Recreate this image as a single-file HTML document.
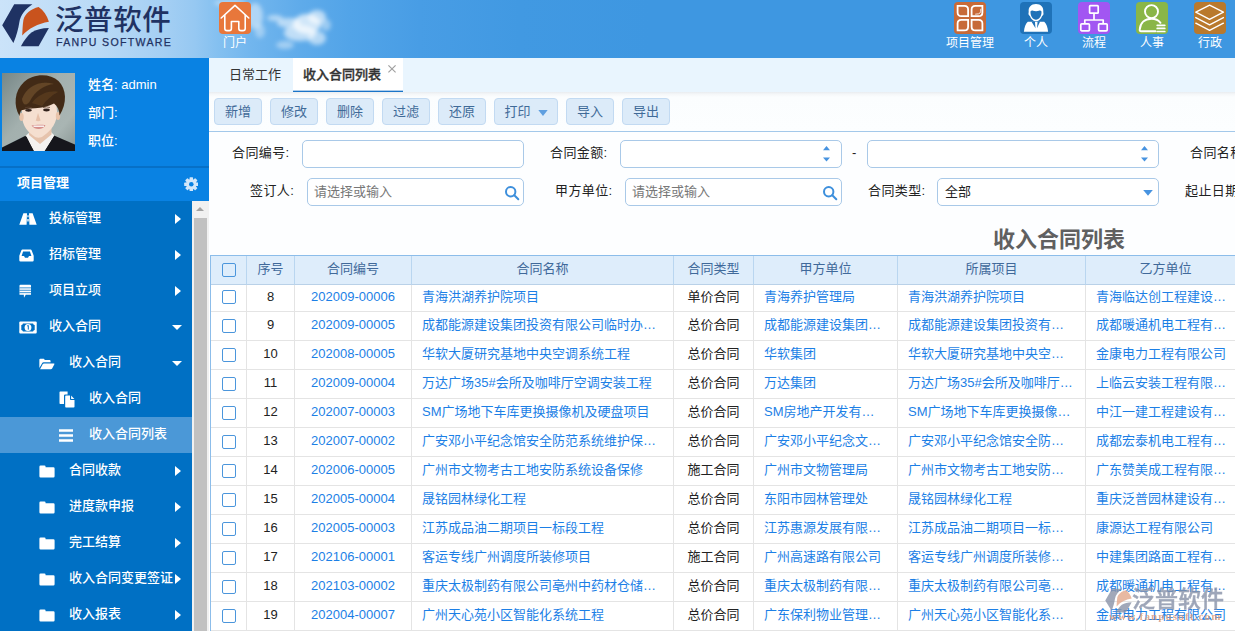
<!DOCTYPE html>
<html lang="zh-CN">
<head>
<meta charset="utf-8">
<title>收入合同列表</title>
<style>
*{box-sizing:border-box;margin:0;padding:0}
html,body{width:1235px;height:631px;overflow:hidden;background:#fff}
body{font-family:"Liberation Sans","Noto Sans CJK SC",sans-serif;font-size:13px;color:#222;position:relative}
.abs{position:absolute}
/* header */
#hdr{position:absolute;left:0;top:0;width:1235px;height:58px;background:linear-gradient(90deg,#cbe3f9 0px,#b9daf6 100px,#a4cff3 165px,#96c8f2 195px,#84c0f0 218px,#72b6ee 250px,#5fabea 300px,#52a4e8 350px,#489de5 420px,#4199e2 520px,#3e97e1 650px,#3e97e1 1235px);overflow:hidden}
#hdr .bline{display:none}
.nav{position:absolute;top:0;text-align:center;color:#fff;font-size:12px;line-height:14px;white-space:nowrap}
.nav .ic{position:absolute;top:2px;width:32px;height:32px;border-radius:4px}
.nav .lb{position:absolute;top:35.5px;left:-20px;width:72px;text-align:center}
/* sidebar */
#user{position:absolute;left:0;top:58px;width:209px;height:108px;background:#0982e3}
#user .t{position:absolute;left:88px;color:#fff;font-size:13px;font-weight:500;line-height:16px;white-space:nowrap;margin-top:1px}
#sep{position:absolute;left:0;top:166px;width:209px;height:2px;background:#0670c7}
#mhead{position:absolute;left:0;top:168px;width:209px;height:33px;background:#0982e3;color:#fff;font-weight:bold;font-size:13px;line-height:30px;padding-left:17px}
#menu{position:absolute;left:0;top:201px;width:192px;height:430px;background:#0070c4;overflow:hidden}
.mi{position:absolute;left:0;width:192px;height:36px;color:#fff;font-weight:500;font-size:13px;line-height:36px;white-space:nowrap}
.mi.on{background:#4b98d7}
.mi svg{position:absolute}
.mi .tx{position:absolute;top:-1px}
.mi .ar{position:absolute;left:175px;top:13px;width:0;height:0;border-left:6px solid #fff;border-top:5px solid transparent;border-bottom:5px solid transparent}
.mi .ad{position:absolute;left:172px;top:16px;width:0;height:0;border-top:5px solid #fff;border-left:5px solid transparent;border-right:5px solid transparent}
#sb{position:absolute;left:192px;top:201px;width:17px;height:430px;background:#f1f1f1}
#sb .th{position:absolute;left:2px;top:17px;width:13px;height:413px;background:#c1c1c1}
#sb .up{position:absolute;left:4px;top:6px;width:0;height:0;border-bottom:4px solid #a3a3a3;border-left:4px solid transparent;border-right:4px solid transparent}
/* main */
#tabs{position:absolute;left:209px;top:58px;width:1026px;height:34px;background:#e9f5fe}
#tabs .t1{position:absolute;left:20px;top:0;height:34px;line-height:33px;font-size:13px;color:#333}
#tabs .t2{position:absolute;left:84px;top:0;width:110px;height:34px;background:#fff;border-bottom:1px solid #1a74c8;box-shadow:inset 0 -1px 0 rgba(26,116,200,.35);line-height:33px;font-size:13px;font-weight:500;-webkit-text-stroke:0.35px #333;color:#333;padding-left:10px}
#tabs .x{position:absolute;left:179px;top:7px;width:8px;height:8px}
#tbar{position:absolute;left:209px;top:92px;width:1026px;height:40px;background:linear-gradient(180deg,#e9ecef 0,#f4f6f8 2px,#fbfdfe 5px,#fcfeff 100%);border-bottom:1px solid #a3c8ea}
.btn{position:absolute;top:6px;height:27px;width:47px;background:#dcebf9;border:1px solid #c2daf2;border-radius:4px;color:#3f6a98;font-size:13px;line-height:25px;text-align:center;white-space:nowrap}
#form{position:absolute;left:209px;top:132px;width:1026px;height:124px;background:#fdfeff}
.lab{position:absolute;font-size:13px;line-height:16px;color:#222;white-space:nowrap;letter-spacing:.4px}
.inp{position:absolute;height:28px;background:#fff;border:1px solid #a9c9e8;border-radius:5px;font-size:13px;line-height:25px;color:#222;padding-left:7px;white-space:nowrap}
.inp.ph{padding-left:6px}
.inp.ph{color:#777}
.su,.sd{position:absolute;width:0;height:0;border-left:3.5px solid transparent;border-right:3.5px solid transparent}
.su{border-bottom:4px solid #4793e0}
.sd{border-top:4px solid #4793e0}
#ttl{position:absolute;left:993px;top:225.5px;font-size:22px;font-weight:bold;color:#606060;line-height:28px;white-space:nowrap}
/* table */
#tbl{position:absolute;left:210px;top:255px;width:1025px;height:376px;border-left:1px solid #8cbdea;border-top:1px solid #8cbdea;overflow:hidden;background:#fff}
.tr{position:absolute;left:0;width:1100px;height:29px}
.tr.h{top:0;height:29px;background:#deedfb}
.td{position:absolute;top:0;height:100%;border-right:1px solid #e4e4e4;border-bottom:1px solid #e4e4e4;font-size:13px;line-height:26px;white-space:nowrap;overflow:hidden;text-overflow:ellipsis;color:#222}
.tr.h .td{border-right:1px solid #b9d6f0;border-bottom:1px solid #b9d1e8;color:#40699a;text-align:center;line-height:25px}
.td.c{text-align:center}
.td.l{padding-left:10px;padding-right:10px;color:#1c7fe6}
.td.b{color:#1c7fe6}
.cb{position:absolute;left:11px;top:7px;width:14px;height:14px;border:1px solid #4b96dc;border-radius:2px;background:transparent}
.tr.h .cb{top:7px}
.tr.f{height:27px}.tr.f .td{line-height:24px}.tr.f .cb{top:5px}
.c0{left:0;width:36px}.c1{left:36px;width:48px}.c2{left:84px;width:117px}.c3{left:201px;width:262px}.c4{left:463px;width:80px}.c5{left:543px;width:144px}.c6{left:687px;width:188px}.c7{left:875px;width:160px}
#wm{position:absolute;left:1104px;top:586px;width:131px;height:40px;opacity:.8}
#wm .wt{position:absolute;left:28px;top:-2px;font-size:23px;line-height:30px;color:#8791a8;font-weight:500;-webkit-text-stroke:0.45px #8791a8;white-space:nowrap}
#wm .wu{position:absolute;left:5px;top:24px;font-family:"Liberation Serif",serif;font-weight:bold;font-size:11px;line-height:12px;letter-spacing:1.15px;color:#dc9672;opacity:.95;white-space:nowrap}
</style>
</head>
<body>
<div id="hdr">
<svg class="abs" style="left:205px;top:0" width="160" height="58" viewBox="0 0 160 58">
<defs><filter id="bl" x="-30%" y="-30%" width="160%" height="160%"><feGaussianBlur stdDeviation="2.1"/></filter></defs>
<g filter="url(#bl)" fill="#fff">
<ellipse cx="25" cy="3" rx="16" ry="4" opacity=".35"/>
<ellipse cx="50" cy="16" rx="8" ry="13" opacity=".45"/>
<ellipse cx="55" cy="31" rx="5" ry="7" opacity=".35"/>
<ellipse cx="70" cy="18" rx="8" ry="3" opacity=".5"/>
<ellipse cx="84" cy="23" rx="12" ry="5" opacity=".55"/>
<ellipse cx="102" cy="24" rx="14" ry="10" opacity=".7"/>
<ellipse cx="112" cy="17" rx="9" ry="7" opacity=".6"/>
<ellipse cx="95" cy="33" rx="16" ry="8" opacity=".6"/>
<ellipse cx="112" cy="38" rx="9" ry="7" opacity=".55"/>
<ellipse cx="80" cy="45" rx="9" ry="4" opacity=".4"/>
<ellipse cx="121" cy="25" rx="5" ry="6" opacity=".4"/>
</g></svg>
<svg class="abs" style="left:0;top:0" width="60" height="52" viewBox="0 0 60 52">
<path d="M14.2 4.3H32.4C25 9.5 20.5 15 19.3 22.5C18.3 29 16.5 36 13.4 43L2.2 25.3Z" fill="#1f3263"/>
<path d="M38.6 7.1C43.5 10.5 47 15.5 48.9 21.7C38 23.5 28.5 28.5 22.2 35.6C22.6 30 22.6 25 23.4 20C25 13.5 31 9 38.6 7.1Z" fill="#c9531d"/>
<path d="M48.9 28L38.6 46.2H20.9C24.5 40 27.5 35.5 31.5 32.5C36 29.5 42 28.2 48.9 28Z" fill="#1f3263"/>
</svg>
<div class="abs" style="left:55px;top:0px;font-size:28.5px;line-height:40px;color:#1f3263;font-weight:500;white-space:nowrap;letter-spacing:0.6px">泛普软件</div>
<div class="abs" style="left:56px;top:35px;font-size:10.6px;line-height:14px;color:#1f3263;white-space:nowrap;letter-spacing:1.3px;-webkit-text-stroke:0.25px #1f3263">FANPU SOFTWARE</div>
<div class="bline"></div>
<div class="nav" style="left:219px"><div class="ic" style="background:#e8773b"><svg width="32" height="32" viewBox="0 0 32 32" fill="none" stroke="#fff" stroke-width="1.6" stroke-linecap="round" stroke-linejoin="round"><path d="M2.2 16L16 3.4L29.8 16"/><path d="M5.8 13.5V26.5Q5.8 28.6 8 28.6H10.3Q12.4 28.6 12.4 26.5V19.5H19.8V26.5Q19.8 28.6 22 28.6H24Q26.2 28.6 26.2 26.5V13.5"/></svg></div><div class="lb">门户</div></div>
<div class="nav" style="left:954px"><div class="ic" style="background:#c76a38"><svg width="32" height="32" viewBox="0 0 32 32" fill="none" stroke="#fff" stroke-width="1.8" stroke-linejoin="miter"><path d="M3.6 3.8H10.4Q14.1 3.8 14.1 7.5V14.1H7.3Q3.6 14.1 3.6 10.4Z"/><path d="M28.4 3.8V10.4Q28.4 14.1 24.7 14.1H17.6V7.5Q17.6 3.8 21.3 3.8Z"/><path d="M14.1 17.9V24.7Q14.1 28.4 10.4 28.4H3.6V21.6Q3.6 17.9 7.3 17.9Z"/><path d="M17.6 17.9H24.7Q28.4 17.9 28.4 21.6V28.4H21.3Q17.6 28.4 17.6 24.7Z"/><path d="M21.2 12.2L24.6 11.8Q26.4 11.4 26.6 9.6L26.8 6.8" stroke-width="0.8"/></svg></div><div class="lb">项目管理</div></div>
<div class="nav" style="left:1020px"><div class="ic" style="background:#1f72b8"><svg width="32" height="32" viewBox="0 0 32 32"><path d="M3.9 29.8C4.4 25 5.5 21.6 7.8 19.8H24.2C26.5 21.6 27.6 25 28.1 29.8Z" fill="#fff"/><path d="M11.4 19.6H14.9L15.5 26.3ZM20.1 19.6H17.6L17 26.3Z" fill="#1f72b8"/><path d="M16 1.9C21 1.9 23.7 5 23.3 9.6C23.2 11 23.7 11.2 23.4 12.4C23.1 13.5 22.4 13.3 22 14.3C21 17.2 18.8 19.3 16 19.3C13.2 19.3 11 17.2 10 14.3C9.6 13.3 8.9 13.5 8.6 12.4C8.3 11.2 8.8 11 8.7 9.6C8.3 5 11 1.9 16 1.9Z" fill="#fff"/><path d="M10.5 10.6C10.2 9 11.4 8.3 13 8.7C14.6 9.3 17.2 9.4 19 8.7C20.6 8.2 21.8 9 21.5 10.6C21.4 14.6 19 17.7 16 17.7C13 17.7 10.6 14.6 10.5 10.6Z" fill="#1f72b8"/></svg></div><div class="lb">个人</div></div>
<div class="nav" style="left:1078px"><div class="ic" style="background:#a256f2"><svg width="32" height="32" viewBox="0 0 32 32" fill="none" stroke="#fff" stroke-width="1.7" stroke-linejoin="round"><rect x="11.6" y="3.6" width="8.6" height="7.6" rx="0.8"/><path d="M16 11.2V18M6.8 21.8V18H25.2V21.8"/><rect x="2.8" y="21.8" width="8.6" height="7" rx="1"/><rect x="20.6" y="21.8" width="8.6" height="7" rx="1"/></svg></div><div class="lb">流程</div></div>
<div class="nav" style="left:1136px"><div class="ic" style="background:#8ab648"><svg width="32" height="32" viewBox="0 0 32 32" fill="none" stroke="#fff" stroke-width="1.6" stroke-linecap="round"><circle cx="15.5" cy="9.6" r="6.5" stroke-width="1.9"/><path d="M19.5 29.3H5Q3.6 29.3 3.7 27.8C4.3 20.5 9 16.8 15.5 16.8C19.5 16.8 22.5 18.2 24.5 20.8" stroke-width="1.9"/><path d="M21.2 23.3H28.8M21.2 26.4H28.8M21.2 29.5H28.8" stroke-width="1.7"/></svg></div><div class="lb">人事</div></div>
<div class="nav" style="left:1194px"><div class="ic" style="background:#b9792c"><svg width="32" height="32" viewBox="0 0 32 32" fill="none" stroke="#fff" stroke-width="1.4" stroke-linejoin="round" stroke-linecap="round"><path d="M15.6 3.2L29.4 10.2L15.6 17.4L1.8 10.2Z"/><path d="M1.8 15.6L15.6 22.8L29.4 15.6"/><path d="M1.8 21.2L15.6 28.4L29.4 21.2"/></svg></div><div class="lb">行政</div></div>
</div>
<div id="user">
<svg class="abs" style="left:2px;top:15px" width="73" height="78" viewBox="0 0 73 78">
<defs><linearGradient id="ag" x1="0" y1="0" x2="1" y2="0.9"><stop offset="0" stop-color="#778787"/><stop offset=".45" stop-color="#a3b0ae"/><stop offset=".8" stop-color="#a9b5b3"/><stop offset="1" stop-color="#8f9c9a"/></linearGradient>
<filter id="ab" x="-10%" y="-10%" width="120%" height="120%"><feGaussianBlur stdDeviation="0.6"/></filter></defs>
<rect width="73" height="78" fill="url(#ag)"/>
<g filter="url(#ab)">
<path d="M-1 79V75L23 63L37 70L52 62.5L74 72V79Z" fill="#16171b"/>
<path d="M24 62.5L28 59H49L52.5 62.5L42.5 79H32Z" fill="#f4f2f0"/>
<path d="M23.5 63L32.5 79H20ZM52.5 62.5L42 79H56Z" fill="#16171b"/>
<path d="M27 54H49.5V61.5L38 71L27 62Z" fill="#e6c3ac"/>
<path d="M20 38C19 50 24 57.5 31 62.5C34.5 65.5 38.5 65.5 42 62.5C49 57.5 55.5 50 55 38C55 27 48 21 38 21C27 21 20 27 20 38Z" fill="#f5dfd0"/>
<ellipse cx="19.5" cy="44" rx="2.2" ry="4" fill="#e8c3aa"/><ellipse cx="56" cy="43" rx="2.2" ry="4" fill="#e8c3aa"/>
<path d="M17.5 43C11.5 33 12 18 22 9C31 0.5 48 0 56.5 8C64.5 16 65.5 30 57.5 42.5C57.5 37 55.5 33 52 30.5C46 33.5 40 35 33 35.2C27 35.6 22.5 36.3 19.5 37.3C18.3 39 17.8 40.5 17.5 43Z" fill="#432c18"/>
<path d="M20 26C25 13 38 7 52 11C42 12 33 18 28 28C25 33 21 33 20 26Z" fill="#6e4d2c" opacity=".75"/>
<path d="M30 30C36 22 46 17 56 19C50 22 44 27 40 33Z" fill="#5a3c20" opacity=".8"/>
<ellipse cx="26.5" cy="37.3" rx="3.3" ry="1.4" fill="#33241e"/><ellipse cx="44.5" cy="37" rx="3.3" ry="1.4" fill="#33241e"/>
<path d="M23 34.8Q26.5 33.6 30 34.8M41 34.5Q44.5 33.3 48 34.5" stroke="#5b4030" stroke-width=".8" fill="none"/>
<path d="M36 40L33.8 47.5Q36 48.8 38.6 47.5Z" fill="#e3bba3" opacity=".85"/>
<path d="M29.5 52.5C33 51.5 40 51.5 43.5 52C41.5 57 33 57.5 29.5 52.5Z" fill="#d58f8b"/>
<path d="M31.5 53.2H42" stroke="#fff" stroke-width="1.3"/>
</g>
</svg>
<div class="t" style="top:18px">姓名: admin</div>
<div class="t" style="top:46px">部门:</div>
<div class="t" style="top:74px">职位:</div>
</div>
<div id="sep"></div>
<div id="mhead">项目管理<svg class="abs" style="left:183.8px;top:8.9px" width="14.6" height="14.6" viewBox="0 0 16 16"><g fill="#d3e7fa"><circle cx="8" cy="8" r="5.7"/><rect x="6.1" y="0.2" width="3.8" height="15.6" rx="0.7"/><rect x="6.1" y="0.2" width="3.8" height="15.6" rx="0.7" transform="rotate(45 8 8)"/><rect x="6.1" y="0.2" width="3.8" height="15.6" rx="0.7" transform="rotate(90 8 8)"/><rect x="6.1" y="0.2" width="3.8" height="15.6" rx="0.7" transform="rotate(135 8 8)"/></g><circle cx="8" cy="8" r="2.5" fill="#0982e3"/></svg></div>
<div id="menu">
<div class="mi" style="top:0px"><svg style="left:19px;top:12px" width="18" height="12" viewBox="0 0 18 12"><path d="M4.4 0.3H8L7.6 11.7H0.3ZM10 0.3H13.6L17.7 11.7H10.4Z" fill="#fff"/><path d="M8.4 2.2H9.6V4.2H8.4ZM8.3 6H9.7V8.6H8.3Z" fill="#fff"/></svg><span class="tx" style="left:49px">投标管理</span><i class="ar"></i></div>
<div class="mi" style="top:36px"><svg style="left:19px;top:12px" width="15" height="13" viewBox="0 0 15 13"><path d="M3.4 0.5H11.6Q12.3 0.5 12.6 1.2L14.7 6.8V11.3Q14.7 12.5 13.5 12.5H1.5Q0.3 12.5 0.3 11.3V6.8L2.4 1.2Q2.7 0.5 3.4 0.5ZM4.1 2.6L2.6 7H5L6 8.8H9L10 7H12.4L10.9 2.6Z" fill="#fff" fill-rule="evenodd"/></svg><span class="tx" style="left:49px">招标管理</span><i class="ar"></i></div>
<div class="mi" style="top:72px"><svg style="left:19px;top:11px" width="12.5" height="15" viewBox="0 0 13 15"><path d="M1.5 0.5H11.5Q12.5 0.5 12.5 1.5V11H7L5.2 14L5 11H0.5V1.5Q0.5 0.5 1.5 0.5Z" fill="#fff"/><path d="M0.5 3.7H12.5M0.5 6.2H12.5M0.5 8.7H12.5" stroke="#0070c4" stroke-width="0.8"/></svg><span class="tx" style="left:49px">项目立项</span><i class="ar"></i></div>
<div class="mi" style="top:108px"><svg style="left:19px;top:12px" width="18" height="13" viewBox="0 0 18 13"><rect x="0.3" y="0.5" width="17.4" height="12" rx="1" fill="#fff"/><rect x="2.3" y="2.5" width="13.4" height="8" fill="#0070c4"/><ellipse cx="9" cy="6.5" rx="3.4" ry="3.6" fill="#fff"/><path d="M8.2 5L9.3 4.4V8.6" stroke="#0070c4" stroke-width="1" fill="none"/><circle cx="2.3" cy="2.5" r="1.5" fill="#fff"/><circle cx="15.7" cy="2.5" r="1.5" fill="#fff"/><circle cx="2.3" cy="10.5" r="1.5" fill="#fff"/><circle cx="15.7" cy="10.5" r="1.5" fill="#fff"/></svg><span class="tx" style="left:49px">收入合同</span><i class="ad"></i></div>
<div class="mi" style="top:144px"><svg style="left:39px;top:12.5px" width="16" height="12" viewBox="0 0 18 13"><path d="M0.4 11V1.6Q0.4 0.5 1.5 0.5H5.2Q6.2 0.5 6.2 1.5V2H12Q13 2 13 3V4.6H5.2Q4 4.6 3.5 5.7Z" fill="#fff"/><path d="M1.2 12.5L4.3 6.6Q4.7 5.8 5.6 5.8H16.8Q17.8 5.8 17.3 6.8L14.8 11.6Q14.3 12.5 13.3 12.5Z" fill="#fff"/></svg><span class="tx" style="left:69px">收入合同</span><i class="ad"></i></div>
<div class="mi" style="top:180px"><svg style="left:59px;top:10px" width="16" height="17" viewBox="0 0 16 17"><path d="M0.5 1.3Q0.5 0.5 1.3 0.5H8.6V3.4H6.2Q5 3.4 5 4.6V13H1.3Q0.5 13 0.5 12.2Z" fill="#fff"/><path d="M6.2 5.3Q6.2 4.5 7 4.5H11V8.2Q11 9 11.8 9H15.5V15.7Q15.5 16.5 14.7 16.5H7Q6.2 16.5 6.2 15.7Z" fill="#fff"/><path d="M12.1 4.6L15.4 7.9H12.1Z" fill="#fff"/></svg><span class="tx" style="left:89px">收入合同</span></div>
<div class="mi on" style="top:216px"><svg style="left:59px;top:12px" width="14" height="13" viewBox="0 0 14 13"><path d="M0 1.5H14M0 6.5H14M0 11.5H14" stroke="#fff" stroke-width="2.4"/></svg><span class="tx" style="left:89px">收入合同列表</span></div>
<div class="mi" style="top:252px"><svg style="left:39px;top:12px" width="16" height="13" viewBox="0 0 16 13"><path d="M0.4 1.7Q0.4 0.5 1.6 0.5H5.4Q6.6 0.5 6.6 1.7V2.2H14.4Q15.6 2.2 15.6 3.4V11.3Q15.6 12.5 14.4 12.5H1.6Q0.4 12.5 0.4 11.3Z" fill="#fff"/></svg><span class="tx" style="left:69px">合同收款</span><i class="ar"></i></div>
<div class="mi" style="top:288px"><svg style="left:39px;top:12px" width="16" height="13" viewBox="0 0 16 13"><path d="M0.4 1.7Q0.4 0.5 1.6 0.5H5.4Q6.6 0.5 6.6 1.7V2.2H14.4Q15.6 2.2 15.6 3.4V11.3Q15.6 12.5 14.4 12.5H1.6Q0.4 12.5 0.4 11.3Z" fill="#fff"/></svg><span class="tx" style="left:69px">进度款申报</span><i class="ar"></i></div>
<div class="mi" style="top:324px"><svg style="left:39px;top:12px" width="16" height="13" viewBox="0 0 16 13"><path d="M0.4 1.7Q0.4 0.5 1.6 0.5H5.4Q6.6 0.5 6.6 1.7V2.2H14.4Q15.6 2.2 15.6 3.4V11.3Q15.6 12.5 14.4 12.5H1.6Q0.4 12.5 0.4 11.3Z" fill="#fff"/></svg><span class="tx" style="left:69px">完工结算</span><i class="ar"></i></div>
<div class="mi" style="top:360px"><svg style="left:39px;top:12px" width="16" height="13" viewBox="0 0 16 13"><path d="M0.4 1.7Q0.4 0.5 1.6 0.5H5.4Q6.6 0.5 6.6 1.7V2.2H14.4Q15.6 2.2 15.6 3.4V11.3Q15.6 12.5 14.4 12.5H1.6Q0.4 12.5 0.4 11.3Z" fill="#fff"/></svg><span class="tx" style="left:69px">收入合同变更签证</span><i class="ar"></i></div>
<div class="mi" style="top:396px"><svg style="left:39px;top:12px" width="16" height="13" viewBox="0 0 16 13"><path d="M0.4 1.7Q0.4 0.5 1.6 0.5H5.4Q6.6 0.5 6.6 1.7V2.2H14.4Q15.6 2.2 15.6 3.4V11.3Q15.6 12.5 14.4 12.5H1.6Q0.4 12.5 0.4 11.3Z" fill="#fff"/></svg><span class="tx" style="left:69px">收入报表</span><i class="ar"></i></div>
</div>
<div id="sb"><div class="up"></div><div class="th"></div></div>
<div id="tabs"><div class="t1">日常工作</div><div class="t2">收入合同列表</div><svg class="x" viewBox="0 0 8 8"><path d="M0.4 0.4L7.6 7.4M7.6 0.4L0.4 7.4" stroke="#a0a0a0" stroke-width="1.2" fill="none"/></svg></div>
<div id="tbar"><div class="btn" style="left:5px;width:48px">新增</div><div class="btn" style="left:61px;width:48px">修改</div><div class="btn" style="left:117px;width:48px">删除</div><div class="btn" style="left:173px;width:48px">过滤</div><div class="btn" style="left:229px;width:48px">还原</div><div class="btn" style="left:285px;width:64px">打印<svg width="10" height="6" viewBox="0 0 10 6" style="margin-left:7px;vertical-align:0.5px"><path d="M0.3 0H9.7L5 5.9Z" fill="#5f9fe0"/></svg></div><div class="btn" style="left:357px;width:48px">导入</div><div class="btn" style="left:413px;width:48px">导出</div></div>
<div id="form">
<div class="lab" style="left:23px;top:13px">合同编号:</div><div class="inp" style="left:93px;top:8px;width:222px"></div>
<div class="lab" style="left:341px;top:13px">合同金额:</div><div class="inp" style="left:411px;top:8px;width:222px"><svg class="abs" style="left:201.5px;top:5px" width="7" height="16" viewBox="0 0 7 16"><path d="M0 4.2L3.5 0L7 4.2ZM0 11.4H7L3.5 15.6Z" fill="#4793e0"/></svg></div>
<div class="lab" style="left:643px;top:13px">-</div><div class="inp" style="left:658px;top:8px;width:292px"><svg class="abs" style="left:272.5px;top:5px" width="7" height="16" viewBox="0 0 7 16"><path d="M0 4.2L3.5 0L7 4.2ZM0 11.4H7L3.5 15.6Z" fill="#4793e0"/></svg></div>
<div class="lab" style="left:981px;top:13px">合同名称:</div>
<div class="lab" style="left:41px;top:51px">签订人:</div><div class="inp ph" style="left:98px;top:46px;width:217px">请选择或输入<svg class="abs" style="left:196px;top:6px" width="16" height="16" viewBox="0 0 16 16" fill="none" stroke="#3d8fdc" stroke-width="2"><circle cx="6.7" cy="6.7" r="4.7"/><path d="M10.3 10.3L14.3 14.3" stroke-linecap="round"/></svg></div>
<div class="lab" style="left:346px;top:51px">甲方单位:</div><div class="inp ph" style="left:416px;top:46px;width:217px">请选择或输入<svg class="abs" style="left:196px;top:6px" width="16" height="16" viewBox="0 0 16 16" fill="none" stroke="#3d8fdc" stroke-width="2"><circle cx="6.7" cy="6.7" r="4.7"/><path d="M10.3 10.3L14.3 14.3" stroke-linecap="round"/></svg></div>
<div class="lab" style="left:659px;top:51px">合同类型:</div><div class="inp" style="left:728px;top:46px;width:222px">全部<svg class="abs" style="left:204.5px;top:10.5px" width="10" height="6" viewBox="0 0 10 6"><path d="M0.2 0H9.8L5 5.8Z" fill="#4793e0"/></svg></div>
<div class="lab" style="left:976px;top:51px">起止日期:</div>
</div>
<div id="ttl">收入合同列表</div>
<div id="tbl">
<div class="tr h"><div class="td c0"><i class="cb"></i></div><div class="td c1">序号</div><div class="td c2">合同编号</div><div class="td c3">合同名称</div><div class="td c4">合同类型</div><div class="td c5">甲方单位</div><div class="td c6">所属项目</div><div class="td c7">乙方单位</div></div>
<div class="tr f" style="top:29px"><div class="td c0"><i class="cb"></i></div><div class="td c c1">8</div><div class="td c b c2">202009-00006</div><div class="td l c3">青海洪湖养护院项目</div><div class="td c c4">单价合同</div><div class="td l c5">青海养护管理局</div><div class="td l c6">青海洪湖养护院项目</div><div class="td l c7">青海临达创工程建设有限公司</div></div>
<div class="tr" style="top:56px"><div class="td c0"><i class="cb"></i></div><div class="td c c1">9</div><div class="td c b c2">202009-00005</div><div class="td l c3">成都能源建设集团投资有限公司临时办公楼项目</div><div class="td c c4">总价合同</div><div class="td l c5">成都能源建设集团投资有限公司</div><div class="td l c6">成都能源建设集团投资有限公司临时办公楼项目</div><div class="td l c7">成都暖通机电工程有限公司</div></div>
<div class="tr" style="top:85px"><div class="td c0"><i class="cb"></i></div><div class="td c c1">10</div><div class="td c b c2">202008-00005</div><div class="td l c3">华软大厦研究基地中央空调系统工程</div><div class="td c c4">总价合同</div><div class="td l c5">华软集团</div><div class="td l c6">华软大厦研究基地中央空调系统工程</div><div class="td l c7">金康电力工程有限公司</div></div>
<div class="tr" style="top:114px"><div class="td c0"><i class="cb"></i></div><div class="td c c1">11</div><div class="td c b c2">202009-00004</div><div class="td l c3">万达广场35#会所及咖啡厅空调安装工程</div><div class="td c c4">总价合同</div><div class="td l c5">万达集团</div><div class="td l c6">万达广场35#会所及咖啡厅空调安装工程</div><div class="td l c7">上临云安装工程有限公司</div></div>
<div class="tr" style="top:143px"><div class="td c0"><i class="cb"></i></div><div class="td c c1">12</div><div class="td c b c2">202007-00003</div><div class="td l c3">SM广场地下车库更换摄像机及硬盘项目</div><div class="td c c4">总价合同</div><div class="td l c5">SM房地产开发有限公司</div><div class="td l c6">SM广场地下车库更换摄像机及硬盘项目</div><div class="td l c7">中江一建工程建设有限公司</div></div>
<div class="tr" style="top:172px"><div class="td c0"><i class="cb"></i></div><div class="td c c1">13</div><div class="td c b c2">202007-00002</div><div class="td l c3">广安邓小平纪念馆安全防范系统维护保养项目</div><div class="td c c4">总价合同</div><div class="td l c5">广安邓小平纪念文物管理局</div><div class="td l c6">广安邓小平纪念馆安全防范系统维护保养项目</div><div class="td l c7">成都宏泰机电工程有限公司</div></div>
<div class="tr" style="top:201px"><div class="td c0"><i class="cb"></i></div><div class="td c c1">14</div><div class="td c b c2">202006-00005</div><div class="td l c3">广州市文物考古工地安防系统设备保修</div><div class="td c c4">施工合同</div><div class="td l c5">广州市文物管理局</div><div class="td l c6">广州市文物考古工地安防系统设备保修</div><div class="td l c7">广东赞美成工程有限公司</div></div>
<div class="tr" style="top:230px"><div class="td c0"><i class="cb"></i></div><div class="td c c1">15</div><div class="td c b c2">202005-00004</div><div class="td l c3">晟铭园林绿化工程</div><div class="td c c4">总价合同</div><div class="td l c5">东阳市园林管理处</div><div class="td l c6">晟铭园林绿化工程</div><div class="td l c7">重庆泛普园林建设有限公司</div></div>
<div class="tr" style="top:259px"><div class="td c0"><i class="cb"></i></div><div class="td c c1">16</div><div class="td c b c2">202005-00003</div><div class="td l c3">江苏成品油二期项目一标段工程</div><div class="td c c4">总价合同</div><div class="td l c5">江苏惠源发展有限公司</div><div class="td l c6">江苏成品油二期项目一标段工程</div><div class="td l c7">康源达工程有限公司</div></div>
<div class="tr" style="top:288px"><div class="td c0"><i class="cb"></i></div><div class="td c c1">17</div><div class="td c b c2">202106-00001</div><div class="td l c3">客运专线广州调度所装修项目</div><div class="td c c4">施工合同</div><div class="td l c5">广州高速路有限公司</div><div class="td l c6">客运专线广州调度所装修项目</div><div class="td l c7">中建集团路面工程有限公司</div></div>
<div class="tr" style="top:317px"><div class="td c0"><i class="cb"></i></div><div class="td c c1">18</div><div class="td c b c2">202103-00002</div><div class="td l c3">重庆太极制药有限公司亳州中药材仓储项目</div><div class="td c c4">总价合同</div><div class="td l c5">重庆太极制药有限公司</div><div class="td l c6">重庆太极制药有限公司亳州中药材仓储项目</div><div class="td l c7">成都暖通机电工程有限公司</div></div>
<div class="tr" style="top:346px"><div class="td c0"><i class="cb"></i></div><div class="td c c1">19</div><div class="td c b c2">202004-00007</div><div class="td l c3">广州天心苑小区智能化系统工程</div><div class="td c c4">总价合同</div><div class="td l c5">广东保利物业管理有限公司</div><div class="td l c6">广州天心苑小区智能化系统工程</div><div class="td l c7">金康电力工程有限公司</div></div>
</div>
<div id="wm"><svg class="abs" style="left:0;top:0" width="34" height="30" viewBox="0 0 60 52"><path d="M14.2 4.3H32.4C25 9.5 20.5 15 19.3 22.5C18.3 29 16.5 36 13.4 43L2.2 25.3Z" fill="#8a93a8"/><path d="M38.6 7.1C43.5 10.5 47 15.5 48.9 21.7C38 23.5 28.5 28.5 22.2 35.6C22.6 30 22.6 25 23.4 20C25 13.5 31 9 38.6 7.1Z" fill="#e3a88c"/><path d="M48.9 28L38.6 46.2H20.9C24.5 40 27.5 35.5 31.5 32.5C36 29.5 42 28.2 48.9 28Z" fill="#8a93a8"/></svg><div class="wt">泛普软件</div><div class="wu">www.fanpusoft.com</div></div>
</body>
</html>
